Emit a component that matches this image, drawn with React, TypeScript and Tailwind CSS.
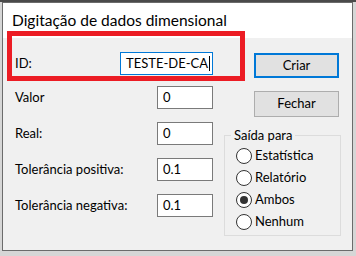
import React from 'react';

const font = { fontFamily: 'Lato, "Open Sans", sans-serif' };

const Field = ({ value, focused = false, className = '' }: { value: string; focused?: boolean; className?: string }) => (
  <div
    className={`h-[23px] flex items-center pl-[5px] bg-white text-[13px] text-black ${
      focused ? 'border border-[#0078d7]' : 'border border-[#7a7a7a]'
    } ${className}`}
  >
    <span>{value}</span>
    {focused && <span className="w-px h-[15px] bg-black ml-[1px]"></span>}
  </div>
);

const Radio = ({ label, checked = false }: { label: string; checked?: boolean }) => (
  <div className="flex items-center h-[22px]">
    <span className="w-[16px] h-[16px] rounded-full border border-[#333] bg-white flex items-center justify-center">
      {checked && <span className="w-[8px] h-[8px] rounded-full bg-[#333]"></span>}
    </span>
    <span className="ml-[3px] text-[13px] text-black">{label}</span>
  </div>
);

const App = () => {
  const rows = [
    { label: 'Valor', value: '0', mt: 'mt-[11px]' },
    { label: 'Real:', value: '0', mt: 'mt-[13px]' },
    { label: 'Tolerância positiva:', value: '0.1', mt: 'mt-[13px]' },
    { label: 'Tolerância negativa:', value: '0.1', mt: 'mt-[13px]' },
  ];

  return (
    <div className="relative w-[356px] h-[256px] bg-[#d6d6d6] overflow-hidden" style={font}>
      <div className="h-[2px] bg-[#4a4a4a]"></div>
      <div className="ml-[2px] w-[351px] h-[249px] border border-[#6b6b6b] bg-[#f0f0f0] flex flex-col">
        <div className="h-[35px] bg-white flex items-center pl-[9px] text-[15.5px] text-black">
          Digitação de dados dimensional
        </div>
        <div className="flex flex-1">
          <div className="w-[198px] ml-[12px] flex flex-col">
            <div className="mt-[14px] flex items-center justify-between">
              <span className="text-[13px] text-black">ID:</span>
              <Field value="TESTE-DE-CA" focused className="w-[93px]" />
            </div>
            {rows.map((r) => (
              <div key={r.label} className={`${r.mt} flex items-center justify-between`}>
                <span className="text-[13px] text-black">{r.label}</span>
                <Field value={r.value} className="w-[56px]" />
              </div>
            ))}
          </div>
          <div className="ml-[41px] flex flex-col">
            <button className="mt-[15px] w-[85px] h-[25px] bg-[#e1e1e1] border-2 border-[#0078d7] text-[13px] text-black">
              Criar
            </button>
            <button className="mt-[13px] w-[85px] h-[26px] bg-[#e1e1e1] border border-[#adadad] text-[13px] text-black">
              Fechar
            </button>
            <fieldset className="-ml-[30px] mt-[9px] w-[117px] h-[110px] border border-[#dcdcdc] pl-[6px] pr-[4px]">
              <legend className="px-[3px] text-[13px] text-black leading-[18px]">Saída para</legend>
              <div className="ml-[5px] mt-[1px] flex flex-col">
                <Radio label="Estatística" />
                <Radio label="Relatório" />
                <Radio label="Ambos" checked />
                <Radio label="Nenhum" />
              </div>
            </fieldset>
          </div>
        </div>
      </div>
      <div className="absolute left-[7px] top-[31px] w-[238px] h-[50px] border-[5px] border-[#ec1c24]"></div>
    </div>
  );
};

export default App;
